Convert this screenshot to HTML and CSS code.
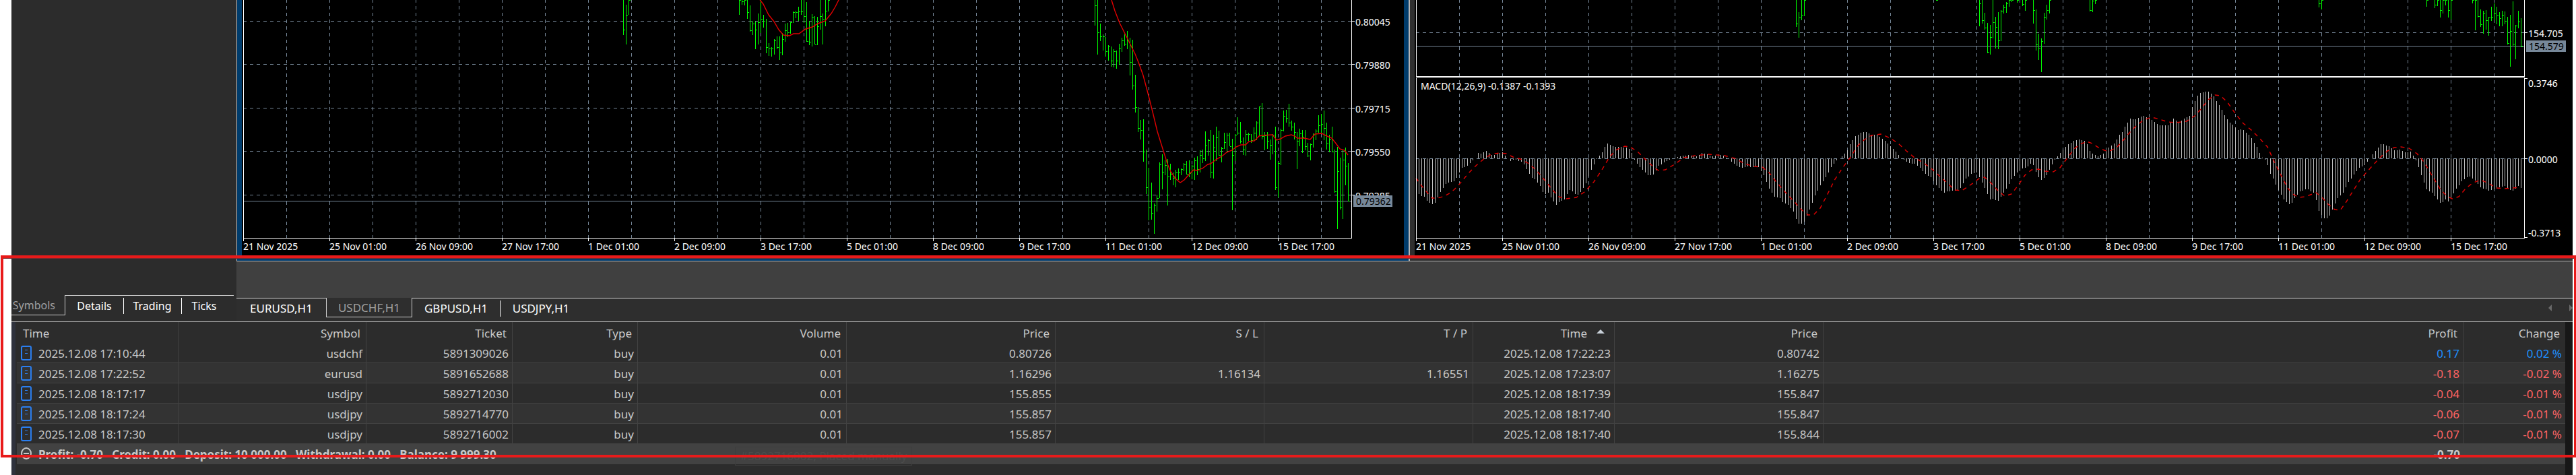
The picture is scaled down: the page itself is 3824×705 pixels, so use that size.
FILE: index.html
```html
<!DOCTYPE html>
<html lang="en">
<head>
    <meta charset="UTF-8">
    <meta name="viewport" content="width=device-width, initial-scale=1.0">
    <title>Trading Terminal</title>
    <link rel="stylesheet" href="styles.css">
</head>
<body>
    <div class="app">
        <div class="upper">
            <aside class="watch">
                <nav class="watch-tabs">
                    <button type="button" class="active"><span>Symbols</span></button>
                    <button type="button">Details</button>
                    <button type="button">Trading</button>
                    <button type="button" class="last">Ticks</button>
                </nav>
            </aside>
            <main class="workspace">
                <div class="charts">
                    <section class="chart-window selected">
                        <svg id="usdchf" viewBox="359 0 1725 384"></svg>
                    </section>
                    <section class="chart-window">
                        <svg id="usdjpy" viewBox="2100 0 1719 384"></svg>
                    </section>
                </div>
                <nav class="chart-tabs">
                    <button type="button" class="first">EURUSD,H1</button>
                    <button type="button" class="active">USDCHF,H1</button>
                    <button type="button" class="next">GBPUSD,H1</button>
                    <button type="button" class="last">USDJPY,H1</button>
                    <div class="scroll">
                        <svg width="6" height="10" viewBox="0 0 6 10"><path d="M5 0v10L0 5z"/></svg>
                        <svg width="6" height="10" viewBox="0 0 6 10"><path d="M1 0v10l5-5z"/></svg>
                    </div>
                </nav>
            </main>
        </div>

        <section class="terminal">
            <table>
                <colgroup>
                    <col class="c-time"><col class="c-symbol"><col class="c-ticket"><col class="c-type">
                    <col class="c-num"><col class="c-num"><col class="c-num"><col class="c-num">
                    <col class="c-close"><col class="c-num"><col><col class="c-change">
                </colgroup>
                <thead>
                    <tr>
                        <th class="left">Time</th><th>Symbol</th><th>Ticket</th><th>Type</th><th>Volume</th><th>Price</th>
                        <th>S / L</th><th>T / P</th>
                        <th class="sorted">Time<svg width="12" height="6" viewBox="0 0 12 6"><path d="M6 0l6 6H0z"/></svg></th>
                        <th>Price</th><th>Profit</th><th>Change</th>
                    </tr>
                </thead>
                <tbody id="deals"></tbody>
                <tfoot>
                    <tr>
                        <td colspan="10" class="left">
                            <svg class="icon" width="16" height="22" viewBox="0 0 16 22"><ellipse cx="8" cy="10" rx="7" ry="8" fill="none" stroke="#c8c8c8" stroke-width="2"/><path d="M4 10h8" stroke="#c8c8c8" stroke-width="2"/></svg><span>Profit: -0.70&nbsp;&nbsp; Credit: 0.00&nbsp;&nbsp; Deposit: 10 000.00&nbsp;&nbsp; Withdrawal: 0.00&nbsp;&nbsp; Balance: 9 999.30</span>
                            <div class="tip">#5892716002, Placed manually</div>
                        </td>
                        <td>-0.70</td>
                        <td></td>
                    </tr>
                </tfoot>
            </table>
        </section>
        <div class="highlight"></div>
    </div>

    <script src="charts.js"></script>
</body>
</html>
```
FILE: styles.css
```css
body {
    margin: 0;
    background: #fff;
    color: #c8c8c8;
    font-family: "Noto Sans", sans-serif;
    font-size: 17px;
}

button {
    border: 0;
    padding: 0;
    background: none;
    color: #fff;
    font: inherit;
    cursor: pointer;
}

.app {
    position: relative;
    display: flex;
    flex-direction: column;
    min-height: 100vh;
    margin: 0 5px 0 17px;
    background: #2c2c2c;
}

.upper {
    display: flex;
}

/* Market watch */
.watch {
    display: flex;
    flex-direction: column;
    justify-content: flex-end;
    width: 330px;
    margin-right: 4px;
    flex: none;
}

.watch-tabs {
    display: flex;
    height: 39px;
    overflow: hidden;
    font-size: 16px;
}

.watch-tabs button {
    position: relative;
    width: 86px;
    height: 30px;
    border-top: 1px solid #d0d0d0;
}

.watch-tabs button.active {
    display: flex;
    justify-content: flex-end;
    align-items: center;
    width: 80px;
    box-sizing: border-box;
    padding-right: 14px;
    border: solid #d0d0d0;
    border-width: 0 1px 1px 0;
    color: #a0a0a0;
}

.watch-tabs button.last {
    flex: 1;
    padding-right: 10px;
}

.watch-tabs button + button + button::before,
.chart-tabs .next + button::before {
    content: '';
    position: absolute;
    left: 0;
    top: 3px;
    width: 1px;
    height: 24px;
    background: #fff;
}

/* Chart windows */
.workspace {
    flex: 1;
    min-width: 0;
    background: #404040;
}

.charts {
    display: flex;
    margin-bottom: 54px;
}

.chart-window {
    flex: 1719 1 0;
    padding: 0 0 3px 7px;
    border-bottom: 1px solid #b4b4b4;
    background: #2f2f2f;
}

.chart-window.selected {
    flex-grow: 1725;
    padding-right: 7px;
    border-left: 1px solid #b4b4b4;
    border-right: 2px solid #b4b4b4;
    background: #003c6c;
}

.chart-window svg {
    display: block;
    width: 100%;
    background: #000;
    font-size: 14px;
}

.chart-tabs {
    display: flex;
    height: 35px;
    background: #2e2e2e;
}

.chart-tabs button {
    position: relative;
    box-sizing: border-box;
    width: 130px;
    height: 29px;
    border-top: 1px solid #d0d0d0;
}

.chart-tabs .first {
    width: 133px;
}

.chart-tabs .last {
    width: 122px;
}

.chart-tabs .active {
    width: 128px;
    border: solid #d0d0d0;
    border-width: 0 1px 1px 1px;
    color: #a0a0a0;
}

.chart-tabs .scroll {
    display: flex;
    justify-content: flex-end;
    align-items: center;
    gap: 24px;
    flex: 1;
    height: 28px;
    border-top: 1px solid #d0d0d0;
}

.scroll svg {
    fill: #6a6a6a;
}

/* Trade history */
.terminal {
    flex: 1;
    border-top: 1px solid #b4b4b4;
    box-shadow: inset 6px 0 #2f323d, inset -11px 0 #171717;
    padding: 0 11px 0 8px;
}

table {
    width: 100%;
    table-layout: fixed;
    border-collapse: separate;
    border-spacing: 0;
}

.c-time { width: 240px; }
.c-symbol { width: 279px; }
.c-ticket { width: 217px; }
.c-type { width: 186px; }
.c-num { width: 310px; }
.c-close { width: 210px; }
.c-change { width: 151px; }

th, td {
    box-sizing: border-box;
    height: 30px;
    padding: 2px 5px 0 6px;
    border-right: 1px solid #424242;
    border-bottom: 1px solid #424242;
    text-align: right;
    font-weight: normal;
    line-height: 24px;
    white-space: nowrap;
}

th {
    height: 31px;
    padding: 2px 8px 0 9px;
    border-bottom: 0;
}

th:last-child, td:last-child {
    border-right: 0;
}

th.left, td.left {
    text-align: left;
}

th.sorted svg {
    margin: 0 6px 6px 14px;
    fill: #c8d0d8;
}

tbody tr:nth-child(even) {
    background: #333;
}

.icon {
    margin-right: 10px;
    vertical-align: -4px;
}

.up { color: #1e90ff; }
.down { color: #ff6464; }

tfoot td {
    position: relative;
    border-right: 0;
    background: #424242;
    font-weight: bold;
}

.tip {
    position: absolute;
    left: 1066px;
    top: 4px;
    padding: 1px 7px;
    border: 1px solid #3e3e3e;
    color: #4c4c4c;
    font-weight: normal;
}

/* Red frame around the history block */
.highlight {
    position: absolute;
    box-sizing: border-box;
    left: -16px;
    right: -5px;
    top: 379px;
    height: 300px;
    border: 4px solid #e81a1a;
    border-right-width: 3px;
    box-shadow: inset 0 1px #7a2a30;
    pointer-events: none;
}
```
FILE: charts.js
```js
const GRID = '#778899';
const dates = ['21 Nov 2025', '25 Nov 01:00', '26 Nov 09:00', '27 Nov 17:00', '1 Dec 01:00', '2 Dec 09:00',
    '3 Dec 17:00', '5 Dec 01:00', '8 Dec 09:00', '9 Dec 17:00', '11 Dec 01:00', '12 Dec 09:00', '15 Dec 17:00'];

// Bars: first x, then high, low, close for every 4 px
const usdchfBars = [
    [925, -5,52,44, 7,66,22, -5,22,0],
    [1097, -5,22,0, -5,7,2, -5,8,0, -5,28,18, 8,47,45, 31,52,35, 32,73,44, 20,66,33, -5,49,28, 22,41,31, 28,79,70,
        64,83,72, 70,84,72, 58,81,60, 54,73,70, 54,89,78, 49,82,58, 35,62,45, 34,55,48, 33,50,33, 17,34,18, 16,27,18,
        10,31,17, -5,22,17, -5,34,24, 3,62,61, 31,67,62, 21,69,26, 24,66,66, 25,67,39, -5,44,24, 20,66,28, -5,39,16, -5,17,0],
    [1625, -5,38,8, -5,81,48, 35,61,54, 51,75,54, 55,84,76, 67,90,69, 69,99,90, 73,100,76, 75,102,90, 65,96,71,
        56,77,60, 51,68,65, 46,73,60, 56,112,92, 59,133,127, 111,167,159, 159,196,190, 178,207,193, 177,240,225,
        222,288,278, 249,327,308, 271,326,316, 302,347,304, 289,314,294, 241,294,244, 229,281,255, 238,260,245,
        236,305,262, 243,267,259, 256,275,264, 252,278,256, 250,267,256, 250,260,251, 242,254,244, 239,259,258,
        238,263,257, 245,266,246, 234,267,238, 232,260,251, 223,256,230, 222,242,235, 195,239,216, 206,231,208,
        193,264,255, 200,265,219, 188,239,204, 194,231,230, 218,241,220, 197,221,211, 197,225,200, 197,217,217,
        206,312,230, 199,239,200, 174,200,197, 181,213,210, 204,230,222, 193,231,199, 197,209,199, 199,212,208,
        189,209,197, 180,208,182, 158,202,157, 153,207,202, 196,223,201, 196,221,210, 207,237,215, 199,229,200,
        188,282,278, 240,293,242, 191,245,193, 164,195,172, 163,182,175, 154,188,182, 179,194,188, 182,207,196,
        196,251,209, 191,217,198, 193,227,203, 193,223,217, 212,233,231, 213,238,214, 198,219,200, 192,208,194,
        171,197,186, 169,199,184, 164,208,190, 182,222,213, 200,226,207, 188,226,225, 222,286,284, 218,340,254,
        234,311,307, 222,325,237, 219,275,246, 242,299,298]
];

const usdjpyBars = [
    [2666, -5,40,35, 18,56,26, -5,30,23, -5,24,0],
    [2874, -5,1,0],
    [2938, -5,39,5, -5,35,30, 19,44,41, 34,79,77, 37,81,55, -5,57,33, 25,72,40, 18,73,60, 15,61,16, 7,20,11,
        3,19,5, -5,10,0, -5,3,0],
    [2994, -5,4,0],
    [3002, -5,9,6, -5,16,0],
    [3018, -5,35,15, 14,75,66, 50,89,71, 57,107,61, 19,65,25, 7,29,15, -5,20,0],
    [3102, -5,17,15, -5,18,1, -5,6,0],
    [3442, -5,11,5, -5,14,0],
    [3602, -5,10,0],
    [3614, -5,12,7, -5,9,0, -5,26,15, -5,20,0, -5,8,0, -5,26,15, -5,29,0],
    [3670, -5,5,0, -5,45,0, -5,26,24, 14,40,36, 16,50,19, 15,44,30, 25,53,26, 10,31,25, 5,30,20, 10,36,23,
        18,39,27, 16,39,22, 17,36,31, 25,66,64, 22,99,46, 2,69,65, 37,88,38, 16,42,32, 27,70,69]
];

const averages = [
    '1126,-3 1133,6 1141,22 1149,32 1156,44 1163,52 1172,53 1178,50 1186,50 1196,43 1206,40 1214,35 1225,31 1234,20 1240,10 1246,-2',
    '1650,0 1655,16 1662,34 1668,46 1675,60 1685,80 1691,95 1697,112 1705,142 1712,170 1718,195 1727,224 1733,243 1738,255 1745,265 1752,271 1758,267 1765,259 1772,252 1777,253 1785,250 1793,244 1797,243 1805,237 1815,231 1821,226 1829,223 1835,218 1842,215 1849,215 1854,210 1862,209 1869,202 1873,201 1889,200 1895,208 1901,206 1908,202 1917,200 1922,202 1926,205 1936,205 1945,207 1952,199 1962,198 1970,202 1977,205 1984,214 1989,221 1996,223 2001,230'
];

// MACD histogram turning points, filled in between
const ZERO = 235;
const macd = [2106,288, 2110,291, 2114,292, 2118,298, 2122,301, 2126,303, 2130,301, 2134,293, 2138,285, 2142,279,
    2146,273, 2150,271, 2158,269, 2162,264, 2166,256, 2170,249, 2178,246, 2182,242, 2186,238, 2190,235, 2194,227,
    2198,228, 2206,224, 2210,227, 2214,230, 2218,230, 2222,228, 2230,226, 2234,231, 2242,239, 2246,237, 2250,237,
    2258,240, 2262,244, 2270,258, 2274,264, 2278,266, 2286,276, 2290,285, 2294,288, 2298,286, 2302,293, 2306,299,
    2310,304, 2314,300, 2322,296, 2326,288, 2330,282, 2334,284, 2338,288, 2342,289, 2346,285, 2354,272, 2358,262,
    2362,252, 2366,244, 2370,236, 2374,231, 2378,226, 2382,218, 2386,213, 2390,215, 2398,218, 2406,218, 2414,219,
    2418,221, 2422,227, 2426,237, 2430,243, 2434,248, 2438,252, 2442,256, 2446,260, 2454,259, 2458,253, 2462,246,
    2470,241, 2478,237, 2482,236, 2490,233, 2498,231, 2506,230, 2514,232, 2518,232, 2526,227, 2534,229, 2542,232,
    2550,229, 2558,231, 2566,236, 2570,240, 2578,246, 2586,249, 2594,247, 2602,248, 2610,248, 2614,254, 2618,260,
    2626,280, 2634,292, 2642,294, 2646,300, 2654,304, 2662,314, 2666,325, 2670,332, 2674,332, 2678,329, 2682,320,
    2686,311, 2694,290, 2702,275, 2710,263, 2718,248, 2726,238, 2730,235, 2734,232, 2742,223, 2746,214, 2750,208,
    2754,202, 2762,197, 2766,196, 2770,196, 2778,200, 2786,200, 2790,203, 2798,209, 2806,217, 2814,225, 2822,235,
    2826,237, 2834,242, 2842,243, 2850,249, 2858,258, 2866,263, 2874,275, 2882,283, 2886,286, 2890,284, 2902,283,
    2906,283, 2910,279, 2918,265, 2926,258, 2930,257, 2934,256, 2938,263, 2942,271, 2946,279, 2954,296, 2958,295,
    2966,298, 2970,292, 2978,280, 2986,266, 2994,256, 3002,250, 3010,247, 3014,243, 3018,245, 3022,255, 3026,263,
    3030,267, 3034,264, 3038,260, 3042,252, 3046,244, 3050,237, 3054,232, 3058,227, 3062,222, 3070,214, 3078,209,
    3086,207, 3094,209, 3098,214, 3102,224, 3106,228, 3114,232, 3122,228, 3130,219, 3138,213, 3146,200, 3150,196,
    3154,188, 3158,182, 3162,176, 3170,177, 3178,173, 3182,172, 3190,175, 3198,181, 3206,186, 3214,186, 3218,186,
    3226,176, 3234,181, 3242,176, 3250,172, 3254,159, 3258,150, 3262,142, 3266,138, 3274,136, 3278,136, 3282,139,
    3286,143, 3290,150, 3294,156, 3298,163, 3302,171, 3306,177, 3310,182, 3314,185, 3322,193, 3326,192, 3330,193,
    3338,200, 3342,205, 3346,212, 3350,218, 3354,227, 3358,234, 3362,237, 3366,245, 3370,258, 3374,265, 3382,282,
    3386,289, 3390,296, 3398,303, 3402,301, 3406,294, 3414,284, 3422,281, 3426,281, 3434,286, 3438,297, 3442,313,
    3446,319, 3450,324, 3454,324, 3458,320, 3466,302, 3470,294, 3478,286, 3486,270, 3494,259, 3502,249, 3510,245,
    3514,240, 3518,235, 3522,229, 3530,219, 3534,214, 3538,214, 3546,217, 3554,223, 3562,222, 3570,226, 3578,225,
    3582,231, 3586,238, 3590,248, 3594,260, 3602,281, 3610,286, 3618,296, 3622,301, 3626,300, 3630,296, 3634,299,
    3638,294, 3646,280, 3654,269, 3662,263, 3666,262, 3670,265, 3674,268, 3682,278, 3694,283, 3702,281, 3710,278,
    3718,276, 3722,280, 3730,283, 3734,280, 3738,276, 3742,279];

const signal = '2102,264 2108,273 2118,285 2126,294 2134,294 2142,292 2150,288 2158,282 2165,275 2180,257 2192,245 2205,234 2214,229 2226,227 2236,228 2246,233 2257,236 2268,242 2280,252 2292,266 2304,281 2314,292 2325,295 2340,293 2352,285 2366,270 2378,252 2390,232 2400,222 2412,217 2420,218 2432,226 2444,238 2456,249 2462,253 2472,252 2484,245 2500,234 2516,231 2536,229 2560,231 2575,235 2590,243 2604,247 2616,248 2626,256 2636,269 2650,285 2664,300 2674,311 2684,319 2692,319 2702,309 2712,290 2724,266 2736,248 2748,232 2758,216 2768,207 2778,201 2792,199 2806,205 2818,213 2830,224 2842,234 2856,242 2868,251 2880,262 2892,273 2902,282 2912,283 2920,278 2930,271 2938,265 2946,263 2956,272 2966,283 2976,291 2986,288 2996,275 3006,260 3016,252 3026,251 3036,254 3048,255 3058,249 3070,233 3080,220 3090,213 3098,210 3106,213 3118,221 3130,225 3142,219 3152,208 3162,196 3172,186 3182,178 3194,174 3206,177 3218,181 3230,182 3246,180 3258,172 3268,161 3278,148 3288,141 3296,142 3306,151 3318,168 3330,183 3342,193 3354,205 3366,218 3376,240 3386,260 3396,279 3404,288 3412,293 3422,292 3430,289 3438,286 3446,292 3456,303 3466,311 3474,312 3482,301 3492,285 3504,266 3520,248 3532,235 3544,224 3554,219 3564,218 3576,220 3588,228 3598,240 3610,260 3622,280 3632,291 3640,295 3650,292 3660,280 3670,272 3682,267 3694,272 3706,279 3718,280 3742,278';

function rect(x, y, w, h, fill) {
    return `<rect x="${x}" y="${y}" width="${w}" height="${h}" fill="${fill}"/>`;
}

function text(x, y, value, fill = '#fff') {
    return `<text x="${x}" y="${y}" fill="${fill}">${value}</text>`;
}

function hDash(x1, x2, y) {
    return `<path d="M${x1} ${y + 0.5}H${x2}" stroke="${GRID}" stroke-dasharray="5 5"/>`;
}

function curve(points, dash = 'none') {
    return `<polyline points="${points}" fill="none" stroke="#e00000" stroke-width="1.4" stroke-dasharray="${dash}" shape-rendering="auto"/>`;
}

function vGrid(left, right, top, bottom) {
    let out = '';
    for (let x = left + 64; x < right; x += 64) {
        out += `<path d="M${x + 0.5} ${top}V${bottom}" stroke="${GRID}" stroke-dasharray="5 5"/>`;
    }
    return out;
}

function bars(groups) {
    let out = '';
    groups.forEach(group => {
        for (let i = 1, x = group[0]; i < group.length; i += 3, x += 4) {
            const [high, low, close] = group.slice(i, i + 3);
            out += rect(x, high, 1, low - high, '#00ff00');
            out += rect(x + 1, close, 2, 1, '#00ff00');
        }
    });
    return out;
}

function timeAxis(left, right) {
    let out = rect(left, 353, right - left + 1, 1, '#fff');
    dates.forEach((date, i) => {
        out += rect(left + i * 128, 353, 1, 5, '#fff') + text(left + i * 128, 371, date);
    });
    return out;
}

function drawUsdchf() {
    let out = vGrid(361, 2006, -1, 353);
    const levels = [[31, '0.80045'], [95, '0.79880'], [160, '0.79715'], [224, '0.79550'], [289, '0.79385']];
    levels.forEach(([y, label]) => {
        out += hDash(361, 2006, y) + rect(2006, y, 5, 1, '#fff') + text(2012, y + 7, label);
    });
    out += rect(361, 298, 1645, 1, GRID) + bars(usdchfBars);
    averages.forEach(points => {
        out += curve(points);
    });
    out += rect(361, 0, 1, 354, '#fff') + rect(2006, 0, 1, 354, '#fff') + timeAxis(361, 2006);
    out += rect(2009, 290, 58, 17, GRID) + text(2013, 304, '0.79362', '#000');
    document.getElementById('usdchf').innerHTML = `<g shape-rendering="crispEdges">${out}</g>`;
}

function drawUsdjpy() {
    let out = vGrid(2102, 3747, -1, 113) + vGrid(2102, 3747, 119, 353);
    out += hDash(2102, 3747, 48) + rect(2102, 68, 1645, 1, GRID) + bars(usdjpyBars);
    for (let i = 0; i < macd.length - 2; i += 2) {
        const [x1, y1, x2, y2] = macd.slice(i, i + 4);
        for (let x = x1; x < x2; x += 4) {
            const y = Math.round(y1 + (y2 - y1) * (x - x1) / (x2 - x1));
            out += rect(x, Math.min(y, ZERO), 1, Math.abs(y - ZERO), '#c0c0c0');
        }
    }
    out += rect(3742, ZERO, 1, 44, '#c0c0c0') + hDash(2102, 3747, ZERO);
    out += curve(signal, '6 6');
    out += rect(2102, 113, 1646, 1, '#fff') + rect(2102, 115, 1646, 1, '#fff');
    out += rect(2102, 0, 1, 114, '#fff') + rect(3747, 0, 1, 114, '#fff');
    out += rect(2102, 115, 1, 239, '#fff') + rect(3747, 115, 1, 239, '#fff') + timeAxis(2102, 3747);
    [48, 116, ZERO, 352].forEach(y => {
        out += rect(3747, y, 5, 1, '#fff');
    });
    out += text(3753, 55, '154.705') + text(3753, 129, '0.3746') + text(3753, 242, '0.0000') + text(3753, 351, '-0.3713');
    out += rect(3750, 60, 59, 17, GRID) + text(3754, 74, '154.579', '#000');
    out += text(2109, 133, 'MACD(12,26,9) -0.1387 -0.1393');
    document.getElementById('usdjpy').innerHTML = `<g shape-rendering="crispEdges">${out}</g>`;
}

const deals = [
    ['2025.12.08 17:10:44', 'usdchf', '5891309026', 'buy', '0.01', '0.80726', '', '', '2025.12.08 17:22:23', '0.80742', '0.17', '0.02 %'],
    ['2025.12.08 17:22:52', 'eurusd', '5891652688', 'buy', '0.01', '1.16296', '1.16134', '1.16551', '2025.12.08 17:23:07', '1.16275', '-0.18', '-0.02 %'],
    ['2025.12.08 18:17:17', 'usdjpy', '5892712030', 'buy', '0.01', '155.855', '', '', '2025.12.08 18:17:39', '155.847', '-0.04', '-0.01 %'],
    ['2025.12.08 18:17:24', 'usdjpy', '5892714770', 'buy', '0.01', '155.857', '', '', '2025.12.08 18:17:40', '155.847', '-0.06', '-0.01 %'],
    ['2025.12.08 18:17:30', 'usdjpy', '5892716002', 'buy', '0.01', '155.857', '', '', '2025.12.08 18:17:40', '155.844', '-0.07', '-0.01 %']
];

const dealIcon = '<svg class="icon" width="16" height="22" viewBox="0 0 16 22"><rect x="1" y="1" width="14" height="20" rx="2" fill="none" stroke="#2b7ff0" stroke-width="2"/><path d="M6 6.500h4M6 11.500h4" stroke="#2b7ff0" stroke-width="1"/></svg>';

function displayDeals() {
    document.getElementById('deals').innerHTML = deals.map(deal => {
        const tone = deal[10].startsWith('-') ? 'down' : 'up';
        return '<tr>' + deal.map((value, i) => {
            if (i === 0) return `<td class="left">${dealIcon}<span>${value}</span></td>`;
            return i > 9 ? `<td class="${tone}">${value}</td>` : `<td>${value}</td>`;
        }).join('') + '</tr>';
    }).join('');
}

drawUsdchf();
drawUsdjpy();
displayDeals();
```
